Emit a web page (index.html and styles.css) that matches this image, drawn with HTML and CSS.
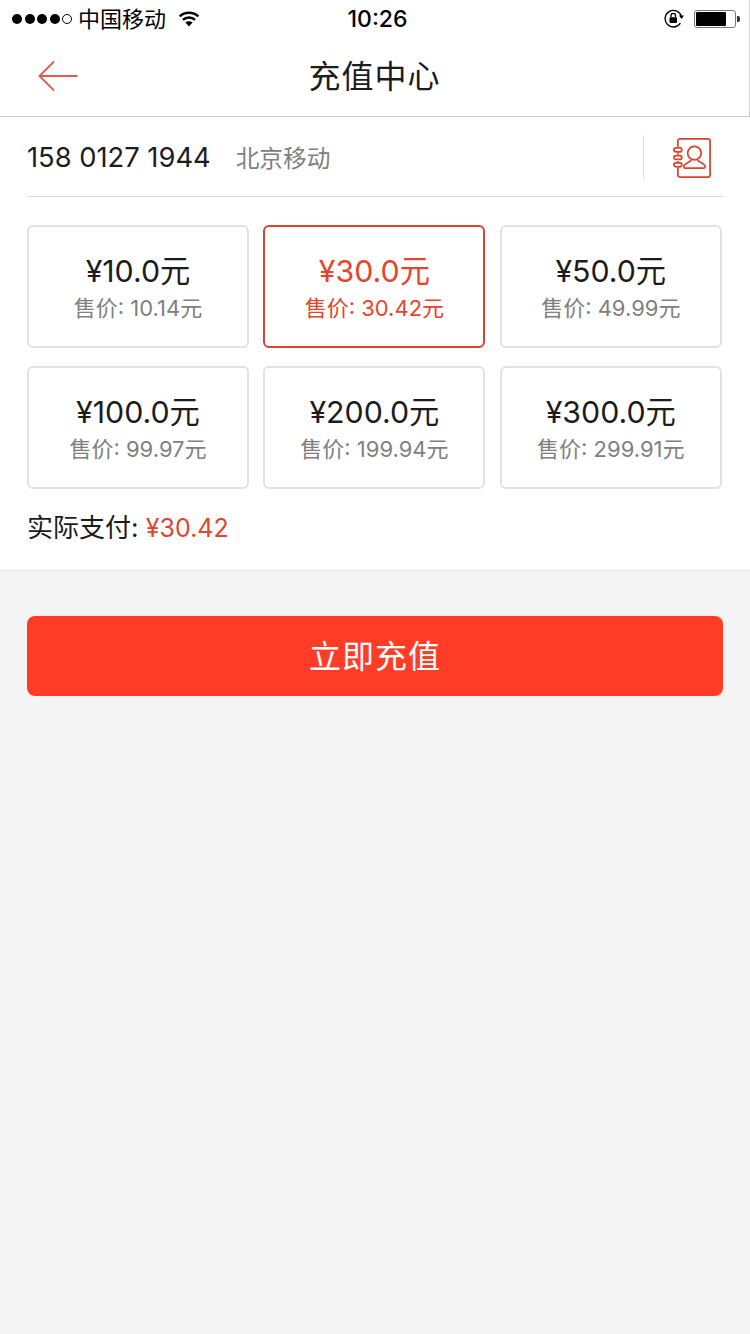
FILE: index.html
```html
<!DOCTYPE html>
<html lang="zh-CN">
<head>
<meta charset="utf-8">
<title>充值中心</title>
<link rel="stylesheet" href="styles.css">
</head>
<body>
<div class="top">
  <div class="status">
    <div class="status-left">
      <span class="signal"><i></i><i></i><i></i><i></i><i class="empty"></i></span>
      <span class="carrier">中国移动</span>
      <svg class="wifi" width="22" height="16" viewBox="0 0 22 16"><path d="M11 15.500 7.400 11.600a5.200 5.200 0 0 1 7.200 0Z" fill="#000"/><path d="M4.900 8.800a9 9 0 0 1 12.200 0M1.700 5.400a13.800 13.800 0 0 1 18.600 0" fill="none" stroke="#000" stroke-width="2.500"/></svg>
    </div>
    <div class="time">10:26</div>
    <div class="status-right">
      <svg class="lock" width="22" height="20" viewBox="0 0 22 20"><path d="M16.400 14.200A8.300 8.300 0 1 1 17.300 7" fill="none" stroke="#000" stroke-width="1.400"/><path d="M15 6.600h5L17.500 10Z" fill="#000"/><rect x="5.500" y="8.200" width="7.500" height="5.800" rx="1" fill="#000"/><path d="M7 8.200V6.600a2.200 2.200 0 0 1 4.500 0v1.600" fill="none" stroke="#000" stroke-width="1.300"/></svg>
      <span class="battery"><span class="battery-fill"></span></span><span class="battery-tip"></span>
    </div>
  </div>
  <div class="nav">
    <svg class="back" width="42" height="34" viewBox="0 0 42 34"><path d="M40.500 17H2.500M17 2.500 2.500 17 17 31.500" fill="none" stroke="#e25b47" stroke-width="1.800"/></svg>
    <h1 class="title">充值中心</h1>
    <span class="nav-spacer"></span>
  </div>
</div>
<main class="panel">
  <div class="phone-row">
    <span class="phone">158 0127 1944</span>
    <span class="region">北京移动</span>
    <span class="divider"></span>
    <svg class="contacts" width="40" height="40" viewBox="0 0 40 41" fill="none" stroke="#d9442c" stroke-width="1.800"><path d="M5.500 9V3a2 2 0 0 1 2-2h29a2 2 0 0 1 2 2v35a2 2 0 0 1-2 2h-29a2 2 0 0 1-2-2v-7.500M5.500 15v2M5.500 23.500v1"/><rect x="1.500" y="10.200" width="8" height="4" rx="2"/><rect x="1.500" y="18" width="8" height="4" rx="2"/><rect x="1.500" y="25.500" width="8" height="4" rx="2"/><circle cx="22.500" cy="15.500" r="7"/><path d="M19 22.500c0 2.500-7.500 3-7.500 7 0 1 .5 1.500 1.500 1.500h19c1 0 1.500-.5 1.500-1.500 0-4-7.500-4.500-7.500-7"/></svg>
  </div>
  <div class="grid">
    <div class="card"><div class="face">¥10.0元</div><div class="price">售价: 10.14元</div></div>
    <div class="card active"><div class="face">¥30.0元</div><div class="price">售价: 30.42元</div></div>
    <div class="card"><div class="face">¥50.0元</div><div class="price">售价: 49.99元</div></div>
    <div class="card"><div class="face">¥100.0元</div><div class="price">售价: 99.97元</div></div>
    <div class="card"><div class="face">¥200.0元</div><div class="price">售价: 199.94元</div></div>
    <div class="card"><div class="face">¥300.0元</div><div class="price">售价: 299.91元</div></div>
  </div>
  <div class="pay">实际支付: <span class="amount">¥30.42</span></div>
</main>
<div class="action"><button class="submit" type="button">立即充值</button></div>
</body>
</html>
```
FILE: styles.css
```css
* { box-sizing: border-box; }
html, body { margin: 0; height: 100%; }
body {
  background: #f4f4f4;
  font-family: Inter, "Noto Sans CJK SC", sans-serif;
  color: #1c1c1c;
  height: 1334px;
  overflow: hidden;
}
.top {
  background: #fff;
  height: 117px;
  border-bottom: 1px solid #c8c8c8;
  border-right: 1px solid #d0d0d0;
}
.status {
  height: 38px;
  display: flex;
  align-items: center;
  justify-content: space-between;
  padding: 0 9px 0 12px;
  position: relative;
  color: #000;
}
.status-left, .status-right { display: flex; align-items: center; }
.signal { display: flex; gap: 2.500px; align-items: center; }
.signal i { width: 10px; height: 10px; border-radius: 50%; background: #000; display: block; }
.signal i.empty { background: #fff; border: 1px solid #000; }
.carrier { font-size: 22px; margin-left: 6px; line-height: 38px; }
.wifi { margin-left: 12px; }
.time { position: absolute; left: 6px; right: 0; text-align: center; font-size: 23px; font-weight: 500; }
.lock { margin-right: 8px; }
.battery { width: 42px; height: 18px; border: 1px solid #777; border-radius: 3px; padding: 1px; display: block; }
.battery-fill { display: block; height: 100%; width: 30px; background: #000; border-radius: 1px; }
.battery-tip { width: 3px; height: 6px; background: #333; border-radius: 0 2px 2px 0; margin-left: 1px; }
.nav {
  height: 78px;
  display: grid;
  grid-template-columns: 1fr auto 1fr;
  align-items: center;
  padding-bottom: 2px;
}
.back { margin-left: 37px; }
.title { margin: -5px 0 0; font-size: 32px; font-weight: 400; letter-spacing: 1px; }
.panel {
  background: #fff;
  height: 454px;
  border-bottom: 1px solid #e4e4e4;
  padding: 0 27px;
}
.phone-row {
  height: 80px;
  border-bottom: 1px solid #dcdcdc;
  display: flex;
  align-items: center;
}
.phone { font-size: 27.300px; padding-top: 1px; }
.region { font-size: 23.700px; color: #808080; margin-left: 25px; }
.divider { width: 1px; height: 44px; background: #dcdcdc; margin-left: auto; }
.contacts { margin: 2px 11px 0 28px; }
.grid {
  display: grid;
  grid-template-columns: 222px 222px 222px;
  column-gap: 14.400px;
  row-gap: 18px;
  margin-top: 28px;
}
.card {
  height: 123px;
  border: 2px solid #e2e2e2;
  border-radius: 6px;
  text-align: center;
  padding-top: 26px;
}
.face { font-size: 30.300px; line-height: 36px; }
.price { font-size: 22px; line-height: 30px; color: #808080; margin-top: 4px; }
.card.active { border-color: #d9442c; }
.card.active .face, .card.active .price { color: #e5452c; }
.pay { font-size: 26px; margin-top: 22px; line-height: 34px; }
.amount { color: #e2452d; font-size: 25px; }
.action { padding: 45px 27px 0; }
.submit {
  display: block;
  width: 100%;
  height: 80px;
  border: 0;
  border-radius: 8px;
  background: #ff3d26;
  color: #fff;
  font: inherit;
  font-size: 32px;
  letter-spacing: 1px;
  padding: 0 0 4px;
}
```
